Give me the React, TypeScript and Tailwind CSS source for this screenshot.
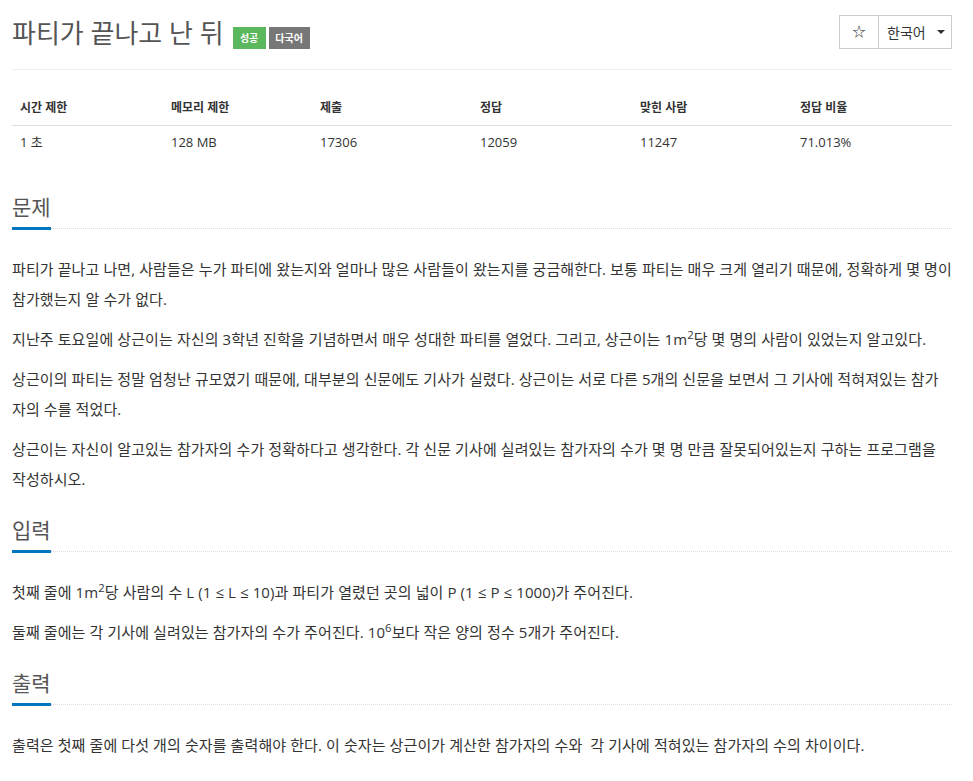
import React from "react";

const font = { fontFamily: '"Open Sans", "Noto Sans CJK KR", sans-serif' };

function Headline({ title }: { title: string }) {
  return (
    <div className="border-b border-dotted border-[#dcdcdc] mb-[25px]">
      <h2 className="inline-block border-b-[3px] border-[#0076c0] mb-[-2px] pb-[6px] text-[21px] leading-[28px] text-[#555] font-normal">
        {title}
      </h2>
    </div>
  );
}

function P({ children }: { children: React.ReactNode }) {
  return <p className="text-[15px] leading-[30px] text-[#333] mb-[10px] tracking-[0.1px]">{children}</p>;
}

export default function App() {
  const heads = ["시간 제한", "메모리 제한", "제출", "정답", "맞힌 사람", "정답 비율"];
  const vals = ["1 초", "128 MB", "17306", "12059", "11247", "71.013%"];
  const widths = ["w-[151px]", "w-[149px]", "w-[160px]", "w-[160px]", "w-[160px]", "w-[160px]"];
  return (
    <div className="bg-white min-h-[781px]" style={font}>
      <div className="ml-[12px] w-[940px] pt-[15px]">
        <div className="h-[55px] border-b border-[#eee] flex justify-between items-start">
          <div className="flex items-end h-[36px]">
            <h1 className="text-[26px] leading-[36px] text-[#555] font-normal">파티가 끝나고 난 뒤</h1>
            <span className="ml-[9px] mb-[2px] h-[22px] w-[33px] flex items-center justify-center bg-[#5cb85c] text-white text-[10px] font-bold">
              성공
            </span>
            <span className="ml-[3px] mb-[2px] h-[22px] w-[41px] flex items-center justify-center bg-[#777] text-white text-[10px] font-bold">
              다국어
            </span>
          </div>
          <div className="flex h-[34px]">
            <div className="w-[40px] h-full border border-[#ccc] flex items-center justify-center text-[13px] text-[#333]">
              ☆
            </div>
            <div className="w-[73px] h-full border border-l-0 border-[#ccc] flex items-center pl-[8px] text-[14px] text-[#333]">
              <span>한국어</span>
              <span className="ml-[11px] w-0 h-0 border-l-[4px] border-r-[4px] border-t-[4px] border-l-transparent border-r-transparent border-t-[#333]"></span>
            </div>
          </div>
        </div>

        <table className="mt-[20px] w-[940px] border-collapse text-[13px] text-[#333]">
          <thead>
            <tr>
              {heads.map((h, i) => (
                <th key={h} className={`${widths[i]} text-left text-[12px] font-bold px-[8px] py-[8px] leading-[19px] border-b border-[#ddd]`}>
                  {h}
                </th>
              ))}
            </tr>
          </thead>
          <tbody>
            <tr>
              {vals.map((v) => (
                <td key={v} className="text-left px-[8px] py-[7px] leading-[19px]">
                  {v}
                </td>
              ))}
            </tr>
          </tbody>
        </table>

        <section className="mt-[34px]">
          <Headline title="문제" />
          <P>
            파티가 끝나고 나면, 사람들은 누가 파티에 왔는지와 얼마나 많은 사람들이 왔는지를 궁금해한다. 보통 파티는 매우 크게 열리기 때문에, 정확하게 몇 명이
            <br />
            참가했는지 알 수가 없다.
          </P>
          <P>
            지난주 토요일에 상근이는 자신의 3학년 진학을 기념하면서 매우 성대한 파티를 열었다. 그리고, 상근이는 1m<sup>2</sup>당 몇 명의 사람이 있었는지 알고있다.
          </P>
          <P>
            상근이의 파티는 정말 엄청난 규모였기 때문에, 대부분의 신문에도 기사가 실렸다. 상근이는 서로 다른 5개의 신문을 보면서 그 기사에 적혀져있는 참가
            <br />
            자의 수를 적었다.
          </P>
          <P>
            상근이는 자신이 알고있는 참가자의 수가 정확하다고 생각한다. 각 신문 기사에 실려있는 참가자의 수가 몇 명 만큼 잘못되어있는지 구하는 프로그램을
            <br />
            작성하시오.
          </P>
        </section>

        <section className="mt-[22px]">
          <Headline title="입력" />
          <P>
            첫째 줄에 1m<sup>2</sup>당 사람의 수 L (1 ≤ L ≤ 10)과 파티가 열렸던 곳의 넓이 P (1 ≤ P ≤ 1000)가 주어진다.
          </P>
          <P>
            둘째 줄에는 각 기사에 실려있는 참가자의 수가 주어진다. 10<sup>6</sup>보다 작은 양의 정수 5개가 주어진다.
          </P>
        </section>

        <section className="mt-[22px]">
          <Headline title="출력" />
          <P>
            출력은 첫째 줄에 다섯 개의 숫자를 출력해야 한다. 이 숫자는 상근이가 계산한 참가자의 수와{"\u00a0"} 각 기사에 적혀있는 참가자의 수의 차이이다.
          </P>
        </section>
      </div>
    </div>
  );
}
